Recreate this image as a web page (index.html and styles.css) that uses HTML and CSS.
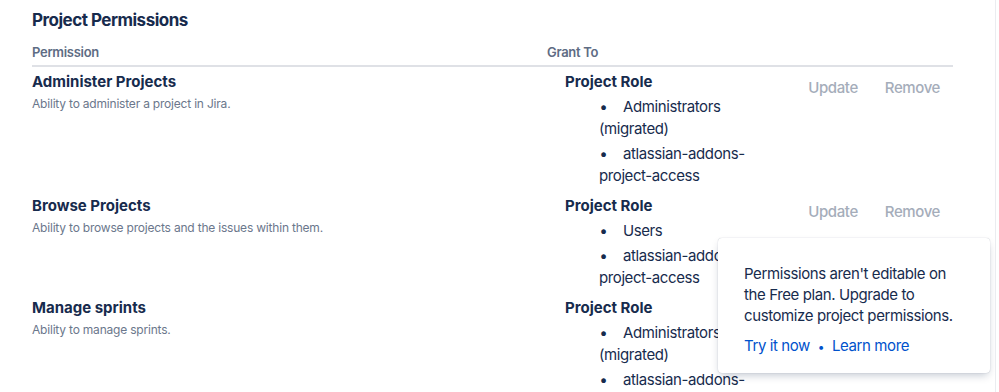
FILE: index.html
```html
<!DOCTYPE html>
<html>
<head>
    <title>Project Permissions</title>
    <link rel="stylesheet" href="styles.css">
</head>
<body>
    <div class="page">
        <h2 class="page-title">Project Permissions</h2>

        <div class="perm-table">
            <div class="perm-head">
                <div>Permission</div>
                <div>Grant To</div>
                <div></div>
            </div>

            <div class="perm-row">
                <div class="perm-name">
                    <h4>Administer Projects</h4>
                    <p>Ability to administer a project in Jira.</p>
                </div>
                <div class="grant">
                    <h4>Project Role</h4>
                    <ul>
                        <li>Administrators (migrated)</li>
                        <li>atlassian-addons-project-access</li>
                    </ul>
                </div>
                <div class="actions">
                    <button class="btn-link" disabled>Update</button>
                    <button class="btn-link" disabled>Remove</button>
                </div>
            </div>

            <div class="perm-row">
                <div class="perm-name">
                    <h4>Browse Projects</h4>
                    <p>Ability to browse projects and the issues within them.</p>
                </div>
                <div class="grant">
                    <h4>Project Role</h4>
                    <ul>
                        <li>Users</li>
                        <li>atlassian-addons-project-access</li>
                    </ul>
                </div>
                <div class="actions">
                    <button class="btn-link" disabled>Update</button>
                    <button class="btn-link" disabled>Remove</button>
                </div>
            </div>

            <div class="perm-row">
                <div class="perm-name">
                    <h4>Manage sprints</h4>
                    <p>Ability to manage sprints.</p>
                </div>
                <div class="grant">
                    <h4>Project Role</h4>
                    <ul>
                        <li>Administrators (migrated)</li>
                        <li>atlassian-addons-project-access</li>
                    </ul>
                </div>
                <div class="actions">
                    <button class="btn-link" disabled>Update</button>
                    <button class="btn-link" disabled>Remove</button>
                </div>
            </div>
        </div>

        <div class="upsell">
            <p>Permissions aren't editable on the Free plan. Upgrade to customize project permissions.</p>
            <div class="upsell-links">
                <a href="#">Try it now</a>
                <span class="dot">•</span>
                <a href="#">Learn more</a>
            </div>
        </div>
    </div>
</body>
</html>
```

FILE: styles.css
```css
body {
    margin: 0;
    font-family: Inter, "Noto Sans", sans-serif;
    color: #172B4D;
    background: #fff;
    overflow: hidden;
}
.page {
    position: relative;
    width: 963px;
    height: 392px;
    padding-left: 32px;
    border-right: 1px solid #EBECF0;
    overflow: hidden;
}
.page-title {
    margin: 8px 0 0;
    font-size: 17px;
    line-height: 24px;
    font-weight: 700;
    letter-spacing: -0.5px;
}
.perm-table {
    width: 921px;
    margin-top: 12px;
}
.perm-head,
.perm-row {
    display: grid;
    grid-template-columns: 515px 1fr auto;
}
.perm-head {
    font-size: 13px;
    line-height: 16px;
    font-weight: 600;
    letter-spacing: -0.3px;
    color: #5E6C84;
    padding-bottom: 5px;
    border-bottom: 2px solid #DFE1E6;
}
.perm-row {
    padding: 5px 0 4px;
}
.perm-name h4,
.grant h4 {
    margin: 0;
    font-size: 15px;
    line-height: 20px;
    font-weight: 700;
}
.perm-name p {
    margin: 4px 0 0;
    font-size: 12px;
    line-height: 16px;
    letter-spacing: -0.2px;
    color: #6B778C;
}
.grant {
    padding-left: 18px;
}
.grant ul {
    list-style: none;
    margin: 4px 0 0 34px;
    padding: 0;
    width: 160px;
    font-size: 15px;
    line-height: 22px;
    letter-spacing: -0.4px;
}
.grant li + li {
    margin-top: 3px;
}
.grant li::before {
    content: "•";
    display: inline-block;
    width: 24px;
    padding-left: 1px;
    box-sizing: border-box;
    font-weight: 700;
}
.actions {
    display: flex;
    gap: 2px;
}
.btn-link {
    background: none;
    border: none;
    font-family: inherit;
    font-size: 15px;
    font-weight: 500;
    letter-spacing: -0.4px;
    line-height: 32px;
    height: 32px;
    padding: 0 13px 0 12px;
    color: #A5ADBA;
    cursor: not-allowed;
}
.upsell {
    position: absolute;
    left: 718px;
    top: 238px;
    width: 272px;
    height: 135px;
    box-sizing: border-box;
    padding: 25px 20px 16px 26px;
    background: #fff;
    border-radius: 4px;
    box-shadow: 0 4px 8px -2px rgba(9, 30, 66, 0.25), 0 0 1px rgba(9, 30, 66, 0.31);
}
.upsell p {
    margin: 0;
    font-size: 15px;
    line-height: 21px;
    letter-spacing: -0.4px;
}
.upsell-links {
    margin-top: 9px;
    font-size: 15px;
    line-height: 22px;
    letter-spacing: -0.4px;
}
.upsell-links a {
    color: #0052CC;
    text-decoration: none;
}
.upsell-links .dot {
    color: #0052CC;
    font-size: 12px;
    margin: 0 4px;
}
```
